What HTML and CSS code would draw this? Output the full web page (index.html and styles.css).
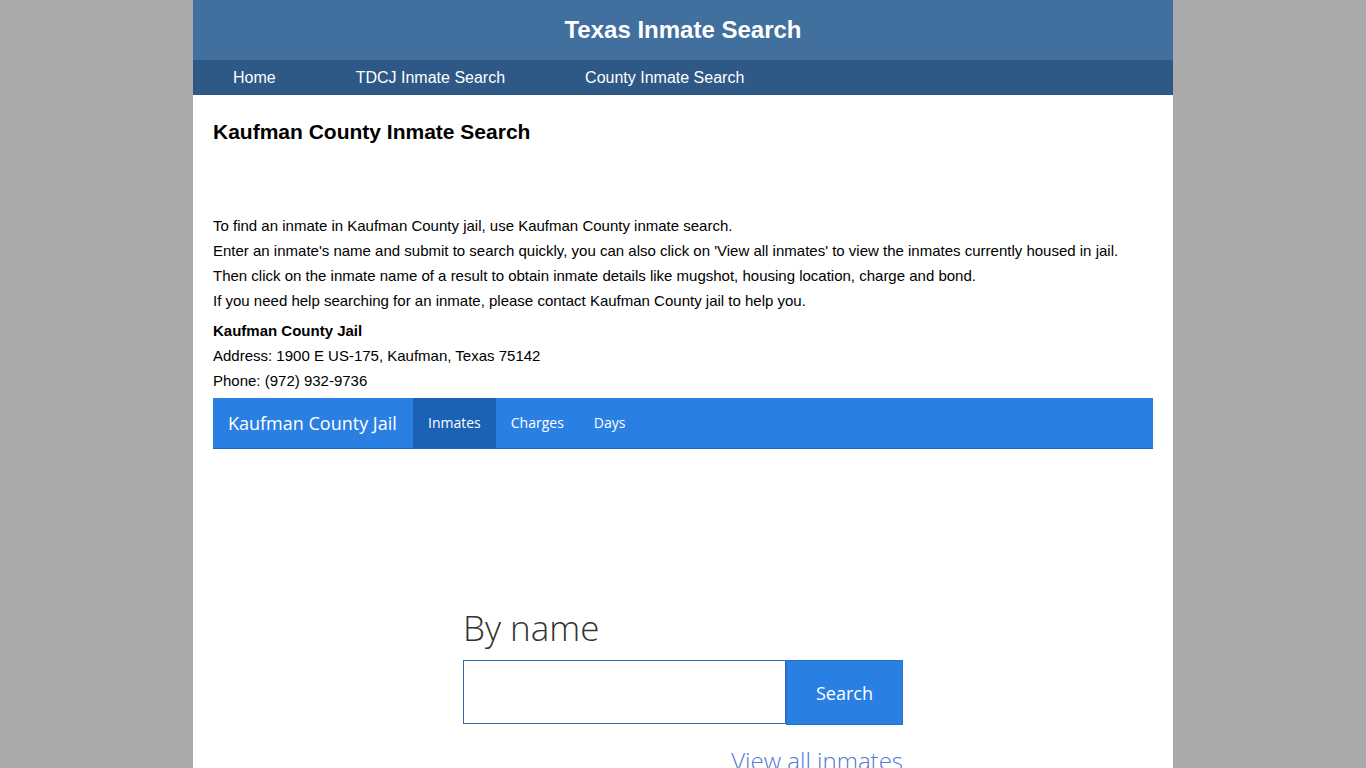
FILE: index.html
```
<!DOCTYPE html>
<html>
<head>
<meta charset="utf-8">
<link rel="stylesheet" href="styles.css">
</head>
<body>
<div class="page">
  <header class="top">Texas Inmate Search</header>
  <nav class="mainnav">
    <a href="#">Home</a>
    <a href="#">TDCJ Inmate Search</a>
    <a href="#">County Inmate Search</a>
  </nav>
  <main class="content">
    <h1 class="title">Kaufman County Inmate Search</h1>
    <div class="intro">
      <p>To find an inmate in Kaufman County jail, use Kaufman County inmate search.</p>
      <p>Enter an inmate's name and submit to search quickly, you can also click on 'View all inmates' to view the inmates currently housed in jail.</p>
      <p>Then click on the inmate name of a result to obtain inmate details like mugshot, housing location, charge and bond.</p>
      <p>If you need help searching for an inmate, please contact Kaufman County jail to help you.</p>
    </div>
    <div class="jailinfo">
      <p><b>Kaufman County Jail</b></p>
      <p>Address: 1900 E US-175, Kaufman, Texas 75142</p>
      <p>Phone: (972) 932-9736</p>
    </div>
    <div class="jailbar">
      <span class="brand">Kaufman County Jail</span>
      <a class="tab active" href="#">Inmates</a>
      <a class="tab" href="#">Charges</a>
      <a class="tab" href="#">Days</a>
    </div>
    <section class="search">
      <h2 class="byname">By name</h2>
      <form class="form">
        <input class="field" type="text">
        <button class="btn" type="button">Search</button>
      </form>
      <div class="viewall"><a href="#">View all inmates</a></div>
    </section>
  </main>
</div>
</body>
</html>
```
FILE: styles.css
```
html, body {
  margin: 0;
  padding: 0;
}
body {
  background: #aaaaaa;
  font-family: "Liberation Sans", Arial, sans-serif;
}
.page {
  width: 980px;
  margin: 0 auto;
  background: #ffffff;
  min-height: 768px;
}
.top {
  height: 60px;
  background: #41709f;
  color: #ffffff;
  font-size: 24px;
  font-weight: bold;
  text-align: center;
  line-height: 60px;
}
.mainnav {
  height: 35px;
  background: #2e5886;
  display: flex;
}
.mainnav a {
  color: #ffffff;
  text-decoration: none;
  font-size: 16px;
  line-height: 35px;
  padding: 0 40px;
}
.content {
  padding: 0 20px;
}
.title {
  margin: 0;
  padding-top: 25px;
  font-size: 21px;
  font-weight: bold;
  color: #000;
  line-height: 24px;
  height: 93px;
}
.intro p, .jailinfo p {
  margin: 0;
  font-size: 15px;
  line-height: 25px;
  color: #000;
}
.intro {
  margin-bottom: 5px;
}
.jailinfo {
  margin-bottom: 5px;
}
.jailbar {
  display: flex;
  height: 50px;
  background: #2a80e2;
  border-bottom: 1px solid #1d6ac0;
  font-family: "Open Sans", sans-serif;
  color: #fff;
}
.brand {
  font-size: 18px;
  line-height: 50px;
  padding: 0 15px;
  width: 170px;
}
.tab {
  color: #fff;
  text-decoration: none;
  font-size: 14px;
  line-height: 50px;
  padding: 0 15px;
}
.tab.active {
  background: #1a62b6;
}
.search {
  width: 440px;
  margin: 0 auto;
  padding-top: 155px;
  font-family: "Open Sans", sans-serif;
}
.byname {
  margin: 0 0 8px 0;
  font-size: 35px;
  font-weight: 300;
  color: #333;
  line-height: 48px;
}
.form {
  display: flex;
  margin: 0;
}
.field {
  box-sizing: border-box;
  width: 323px;
  height: 64px;
  border: 1px solid #2a6bb5;
  margin: 0;
  padding: 0 10px;
  outline: none;
}
.btn {
  box-sizing: border-box;
  width: 117px;
  height: 65px;
  background: #2a80e2;
  border: 1px solid #2a72c8;
  color: #fff;
  font-family: "Open Sans", sans-serif;
  font-size: 18px;
  margin: 0;
}
.viewall {
  text-align: right;
  margin-top: 18px;
}
.viewall a {
  color: #5777d6;
  text-decoration: none;
  font-size: 24px;
  font-weight: 300;
  line-height: 36px;
}
```
